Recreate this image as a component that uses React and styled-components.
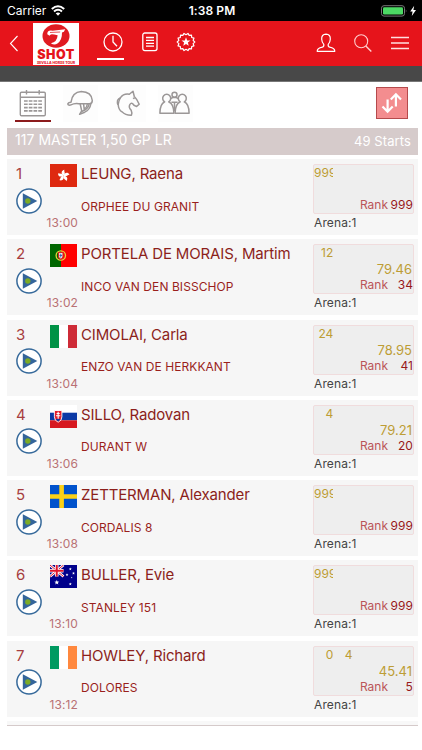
import React from 'react';
import styled, { createGlobalStyle } from 'styled-components';

const GlobalStyle = createGlobalStyle`
  * {
    box-sizing: border-box;
  }

  body {
    margin: 0;
    background: #fff;
    font-family: Inter, 'Liberation Sans', sans-serif;
  }

  svg {
    display: block;
    flex: none;
  }
`;

const Screen = styled.div`
  width: 422px;
  height: 750px;
  overflow: hidden;
  background: #fff;
`;

const StatusBar = styled.div`
  display: grid;
  grid-template-columns: 1fr auto 1fr;
  align-items: center;
  height: 21px;
  padding: 0 5px 0 7px;
  background: #000;
  color: #fff;
  font-size: 12px;
`;

const Carrier = styled.div`
  display: flex;
  align-items: center;
  gap: 5px;
`;

const Clock = styled.div`
  font-weight: 600;
  letter-spacing: 0.1px;
`;

const Battery = styled.div`
  display: flex;
  justify-content: flex-end;
`;

const NavBar = styled.header`
  display: flex;
  align-items: center;
  height: 45px;
  background: #e6141b;
`;

const BackButton = styled.button`
  width: 33px;
  height: 45px;
  padding: 0 0 0 9px;
  border: 0;
  background: none;
`;

const Logo = styled.div`
  display: flex;
  flex-direction: column;
  align-items: center;
  width: 46px;
  height: 42px;
  margin: 0 18px 0 0;
  padding-top: 1px;
  background: #fff;
  color: #e6141b;
`;

const LogoName = styled.span`
  height: 13px;
  font-size: 12.5px;
  line-height: 13px;
  font-weight: 900;
  letter-spacing: 0.5px;
`;

const LogoTagline = styled.span`
  height: 4px;
  font-size: 3.5px;
  line-height: 4px;
  font-weight: 800;
  white-space: nowrap;
`;

const NavItem = styled.button`
  display: flex;
  align-items: center;
  justify-content: center;
  width: ${(p) => p.$width || 37}px;
  height: 34px;
  padding: 0;
  border: 0;
  border-bottom: 2px solid ${(p) => (p.$active ? '#fff' : 'transparent')};
  background: none;
`;

const NavPrimary = styled.div`
  display: flex;
  gap: 5px;
  padding-bottom: 1px;

  ${NavItem}:first-child {
    padding-left: 4px;
  }
`;

const NavActions = styled.div`
  display: flex;
  margin-left: auto;
  padding: 1px 4px 0 0;
`;

const Divider = styled.div`
  height: 16px;
  background: #484848;
  border-bottom: 1px solid #777;
`;

const Tabs = styled.nav`
  display: flex;
  height: 46px;
  padding: 3px 14px 0 15px;
  gap: 12px;
`;

const Tab = styled.button`
  display: flex;
  align-items: center;
  justify-content: center;
  width: 35.5px;
  height: 37px;
  padding: 0;
  border: 0;
  border-bottom: 2px solid ${(p) => (p.$active ? '#8c1a1c' : 'transparent')};
  background: ${(p) => (p.$active ? '#fff' : '#fdfdfd')};
`;

const SortButton = styled.button`
  display: flex;
  align-items: center;
  justify-content: center;
  width: 32px;
  height: 32px;
  margin: 2px 0 0 auto;
  padding: 0;
  border: 1px solid #b54a4c;
  background: #f38d8f;
`;

const SectionHeader = styled.div`
  display: flex;
  justify-content: space-between;
  align-items: center;
  height: 27px;
  margin: 0 4px 0 7px;
  padding: 0 7px 3px 8px;
  background: #d6cbcb;
  color: #fff;
`;

const ClassTitle = styled.span`
  font-size: 14px;
  letter-spacing: 0.04px;
  padding-bottom: 1px;
`;

const StartCount = styled.span`
  font-size: 13px;
  padding-top: 2px;
  letter-spacing: 0.1px;
`;

const StartList = styled.div`
  display: flex;
  flex-direction: column;
  gap: 4.3px;
  margin: 0 4px 0 7px;
  padding-top: 4px;
`;

const Row = styled.div`
  display: grid;
  grid-template-columns: 43px 31px 1fr 105px;
  grid-template-rows: 28.6px 26.4px 21px;
  height: 76px;
  background: #f6f6f6;
  white-space: nowrap;
`;

const StartNumber = styled.div`
  padding: 1px 0 0 9px;
  font-size: 15px;
  line-height: 28px;
  color: #a73e40;
`;

const FlagBox = styled.div`
  padding-top: 5px;
`;

const Rider = styled.div`
  padding-top: 1px;
  font-size: 15px;
  line-height: 27px;
  letter-spacing: -0.15px;
  color: #8c1f1b;
`;

const PlayButton = styled.button`
  grid-column: 1 / 3;
  width: 26px;
  height: 26px;
  margin-left: 9px;
  padding: 0;
  border: 0;
  background: none;
`;

const Horse = styled.div`
  padding-top: 6px;
  font-size: 12px;
  line-height: 26px;
  letter-spacing: 0.07px;
  color: #9a1f1c;
`;

const StartTime = styled.div`
  grid-column: 1 / 3;
  grid-row: 3;
  padding-right: 3px;
  font-size: 12px;
  line-height: 18px;
  letter-spacing: 0.1px;
  text-align: right;
  color: #b97174;
`;

const Result = styled.div`
  grid-column: 4;
  grid-row: 1 / 4;
  padding-top: 5px;
`;

const ScoreBox = styled.div`
  width: 101px;
  height: 50px;
  border: 1px solid #f0dcdd;
  border-radius: 2px;
  background: #eee;
`;

const Faults = styled.div`
  display: flex;
  height: 16px;
  font-size: 12px;
  line-height: 16px;
  color: #bd9d35;
`;

const Fault = styled.span`
  width: 19.3px;
  overflow: hidden;
  text-align: right;
`;

const RideTime = styled.div`
  height: 16px;
  padding-right: 1px;
  font-size: 13px;
  line-height: 17px;
  text-align: right;
  color: #bd9d35;
`;

const Rank = styled.div`
  display: grid;
  grid-template-columns: 1fr 25px;
  font-size: 12px;
  line-height: 16px;
  text-align: right;
  color: #bb5558;
`;

const RankValue = styled.span`
  letter-spacing: 0.1px;
  color: #98191b;
`;

const Arena = styled.div`
  padding-left: 1px;
  font-size: 12px;
  line-height: 18px;
  letter-spacing: 0.12px;
  color: #444;
`;

const NextRow = styled.div`
  height: 5px;
  margin: 4px 4px 0 7px;
  background: #f8f8f8;
  border-bottom: 1px solid #d5caca;
`;

const Star = ({ x, y, r, fill = '#fff' }) => {
  const points = Array.from({ length: 10 }, (_, i) => {
    const radius = i % 2 ? r * 0.42 : r;
    const angle = (Math.PI / 5) * i - Math.PI / 2;
    return `${x + radius * Math.cos(angle)},${y + radius * Math.sin(angle)}`;
  });
  return <polygon points={points.join(' ')} fill={fill} />;
};

const flags = {
  hk: (
    <>
      <path d="M0 0h27v23H0z" fill="#de2910" />
      {[0, 72, 144, 216, 288].map((angle) => (
        <path key={angle} transform={`rotate(${angle} 13.5 11.7)`} d="M13.5 11.7C10.7 9.5 11.2 6.3 14.5 5.7C13.5 7.3 16.3 9.1 13.5 11.7Z" fill="#fff" />
      ))}
    </>
  ),
  pt: (
    <>
      <path d="M0 0h27v23H0z" fill="#f00" />
      <path d="M0 0h11v23H0z" fill="#060" />
      <circle cx="10.8" cy="11.5" r="4.7" fill="none" stroke="#e8d43a" strokeWidth="1.3" />
      <path d="M8.6 8.5h4.4v4q0 2-2.2 2.7Q8.6 14.5 8.6 12.5Z" fill="#fff" stroke="#d22" strokeWidth="1.2" />
      <path d="M10.8 9.6v4M9.5 11.4h2.6" stroke="#345fa5" />
    </>
  ),
  it: (
    <>
      <path d="M0 0h27v23H0z" fill="#fff" />
      <path d="M0 0h9v23H0z" fill="#009246" />
      <path d="M18 0h9v23h-9z" fill="#ce2b37" />
    </>
  ),
  sk: (
    <>
      <path d="M0 0h27v8H0z" fill="#fff" />
      <path d="M0 7.7h27v7.6H0z" fill="#0b39a5" />
      <path d="M0 15.3h27V23H0z" fill="#d71820" />
      <path d="M4.4 5.5h7.5v6.3q0 4-3.75 5.4Q4.4 15.8 4.4 11.8Z" fill="#e31c2a" stroke="#fff" strokeWidth="0.9" />
      <path d="M8.15 6.8v7M6.6 8.5h3.1M6 10.8h4.3" stroke="#fff" strokeWidth="1.1" />
      <path d="M5.8 14.6q1.3-1.5 2.35-.4q1.1-1.1 2.3.4l-2.3 1.8Z" fill="#0b39a5" />
    </>
  ),
  se: (
    <>
      <path d="M0 0h27v23H0z" fill="#0052cc" />
      <path d="M9.3 0h4.6v23H9.3zM0 9.2h27v4.6H0z" fill="#fbd116" />
    </>
  ),
  au: (
    <>
      <path d="M0 0h27v23H0z" fill="#00008b" />
      <path d="M0 0l13.5 11.5M13.5 0L0 11.5" stroke="#fff" strokeWidth="2.6" />
      <path d="M0 0l13.5 11.5M13.5 0L0 11.5" stroke="#e0142d" strokeWidth="1" />
      <path d="M6.75 0v11.5M0 5.75h13.5" stroke="#fff" strokeWidth="3.6" />
      <path d="M6.75 0v11.5M0 5.75h13.5" stroke="#e0142d" strokeWidth="2" />
      <Star x={6.8} y={17.5} r={2.6} />
      <Star x={20.3} y={4} r={1.5} />
      <Star x={17} y={9.8} r={1.5} />
      <Star x={23.5} y={8.3} r={1.5} />
      <Star x={20.3} y={19} r={1.6} />
      <Star x={21.7} y={12.6} r={0.8} />
    </>
  ),
  ie: (
    <>
      <path d="M0 0h27v23H0z" fill="#fff" />
      <path d="M0 0h9v23H0z" fill="#009a61" />
      <path d="M18 0h9v23h-9z" fill="#ff883e" />
    </>
  ),
};

const Flag = ({ code }) => (
  <svg width="27" height="23" viewBox="0 0 27 23">{flags[code]}</svg>
);

const PlayIcon = () => (
  <svg width="26" height="26" viewBox="0 0 26 26">
    <circle cx="13" cy="13" r="12.1" fill="#fff" stroke="#376a9b" strokeWidth="1.5" />
    <path d="M6.8 5.2L21.3 13L6.8 20.8Z" fill="#34659a" />
    <circle cx="11.8" cy="13" r="2.7" fill="#7cab26" />
  </svg>
);

const LogoMark = () => (
  <svg width="28" height="24" viewBox="0 0 29 26" preserveAspectRatio="none">
    <ellipse cx="14.5" cy="13" rx="14" ry="12.7" fill="#e01b22" />
    <path d="M5.5 11.2Q5 6.2 11 7.2L24 5.7L22.7 8.5L20.7 9.3Q21 17.5 16 21.2Q12.5 23.2 9.2 20.8Q15.7 19.6 16.2 12.2L12.5 11.5Q8.7 10 7.8 12.8Z" fill="#fff" />
    <path d="M8.3 9.2l10.5-.5" stroke="#e01b22" strokeWidth="0.8" />
  </svg>
);

const badgePath = () => {
  const points = Array.from({ length: 28 }, (_, i) => {
    const r = i % 2 ? 7.3 : 8.8;
    const a = (Math.PI / 14) * i;
    return `${10 + r * Math.cos(a)},${10 + r * Math.sin(a)}`;
  });
  return `M${points.join('L')}Z`;
};

const CalendarIcon = () => (
  <svg width="28" height="28" viewBox="0 0 28 28" fill="none" stroke="#9b9797" strokeWidth="1.4">
    <rect x="1.3" y="3.2" width="25" height="23.5" rx="1.2" />
    <path d="M7.5 1v4.5M20.2 1v4.5M1.3 8.2h25" />
    <path d="M5 12h18M5 15.3h18M5 18.6h18M5 21.9h18" strokeWidth="1.6" strokeDasharray="3.7 1.05" />
  </svg>
);

const HelmetIcon = () => (
  <svg width="28" height="28" viewBox="0 0 28 28" fill="none" stroke="#9b9797" strokeWidth="1.5" strokeLinejoin="round" strokeLinecap="round">
    <path d="M5 13.2Q6.2 3.3 15.3 2.6Q25.6 3 26.3 11.5Q26.3 14.7 23.5 14.8H12.7Q9 14 4.3 16.1Q1.6 16.4 1.9 14.6Q2.5 13.3 5 13.2Z" />
    <path d="M14.2 15L15.7 21.8L13.6 25.3L18.7 23.2Q24 20.6 24.8 15M17.6 15L18.2 20.2Q21 18.5 21.4 15" />
    <path d="M16.2 22.3Q22 20 23 15.5" />
  </svg>
);

const HorseIcon = () => (
  <svg width="28" height="28" viewBox="0 0 28 28" fill="none" stroke="#9b9797" strokeWidth="1.5" strokeLinejoin="round" strokeLinecap="round">
    <path d="M19 2.2L20.3 7.5Q23.2 10.3 25.2 15.2L22.6 17.4Q19.8 17 18.6 14.6Q16.9 13.6 15.7 15.8Q14.4 18.2 17.2 21.3Q18.4 23.7 17.4 26.2Q11.5 26.4 8 22.8Q4.5 20.9 4.2 15.5Q3 15 3.6 11.3Q4.5 9.3 6.3 8.9Q9.7 4.3 15.3 5.3Z" />
    <path d="M6.3 8.9Q4.9 11 4.2 15.5M19.5 9.2l.6.3" />
  </svg>
);

const PeopleIcon = () => (
  <svg width="32" height="28" viewBox="0 0 32 28" fill="none" stroke="#9b9797" strokeWidth="1.5" strokeLinejoin="round">
    <path d="M5.7 12.8A4 4 0 1 1 9.7 12.8Q14.9 15.1 14.9 24.3H.9Q.9 15.1 5.7 12.8Z" />
    <path d="M21.3 12.8A4 4 0 1 1 25.3 12.8Q30.1 15.1 30.1 24.3H16.1Q16.1 15.1 21.3 12.8Z" />
    <circle cx="15.5" cy="5.8" r="2.5" />
    <path d="M11.7 9.5L14.2 8.4H16.8L19.3 9.5M12.4 13.3h6.2M15.5 13.3V22" />
  </svg>
);

const tabs = [
  { name: 'Schedule', icon: CalendarIcon },
  { name: 'Riders', icon: HelmetIcon },
  { name: 'Horses', icon: HorseIcon },
  { name: 'Teams', icon: PeopleIcon },
];

const starts = [
  { rider: 'LEUNG, Raena', horse: 'ORPHEE DU GRANIT', flag: 'hk', time: '13:00', faults: ['999'], rank: 999 },
  { rider: 'PORTELA DE MORAIS, Martim', horse: 'INCO VAN DEN BISSCHOP', flag: 'pt', time: '13:02', faults: ['12'], rideTime: '79.46', rank: 34 },
  { rider: 'CIMOLAI, Carla', horse: 'ENZO VAN DE HERKKANT', flag: 'it', time: '13:04', faults: ['24'], rideTime: '78.95', rank: 41 },
  { rider: 'SILLO, Radovan', horse: 'DURANT W', flag: 'sk', time: '13:06', faults: ['4'], rideTime: '79.21', rank: 20 },
  { rider: 'ZETTERMAN, Alexander', horse: 'CORDALIS 8', flag: 'se', time: '13:08', faults: ['999'], rank: 999 },
  { rider: 'BULLER, Evie', horse: 'STANLEY 151', flag: 'au', time: '13:10', faults: ['999'], rank: 999 },
  { rider: 'HOWLEY, Richard', horse: 'DOLORES', flag: 'ie', time: '13:12', faults: ['0', '4'], rideTime: '45.41', rank: 5 },
];

function TopBar() {
  return (
    <NavBar>
      <BackButton aria-label="Back">
        <svg width="10" height="17" viewBox="0 0 10 17" fill="none" stroke="#fff" strokeWidth="1.1">
          <path d="M8.5 1L1.5 8.5L8.5 16" />
        </svg>
      </BackButton>
      <Logo>
        <LogoMark />
        <LogoName>SHOT</LogoName>
        <LogoTagline>SEVILLA HORSE TOUR</LogoTagline>
      </Logo>
      <NavPrimary>
        <NavItem $active $width={27} aria-label="Start lists">
          <svg width="20" height="20" viewBox="0 0 20 20" fill="none" stroke="#fff" strokeWidth="1.3">
            <circle cx="10" cy="10" r="9" />
            <path d="M10 3.7V10l4 4.3" />
          </svg>
        </NavItem>
        <NavItem $width={41} aria-label="Results">
          <svg width="16" height="20" viewBox="0 0 16 20" fill="none" stroke="#fff" strokeWidth="1.3">
            <rect x="0.8" y="1" width="14.2" height="17.6" rx="2" />
            <path d="M4 5.5h8M4 8.4h8M4 11.3h8M4 14.2h8" />
          </svg>
        </NavItem>
        <NavItem $width={22} aria-label="Rankings">
          <svg width="20" height="20" viewBox="0 0 20 20">
            <path d={badgePath()} fill="none" stroke="#fff" strokeWidth="1.2" strokeLinejoin="round" />
            <Star x={10} y={10} r={4.7} />
          </svg>
        </NavItem>
      </NavPrimary>
      <NavActions>
        <NavItem aria-label="Profile">
          <svg width="20" height="20" viewBox="0 0 20 20" fill="none" stroke="#fff" strokeWidth="1.2" strokeLinejoin="round">
            <path d="M10 1.2Q5.4 1.3 5.7 6.2Q5.9 9.5 7.8 11.4Q8.2 13.6 6.4 14.1Q1.2 15 1.2 18.3H18.8Q18.8 15 13.6 14.1Q11.8 13.6 12.2 11.4Q14.1 9.5 14.3 6.2Q14.6 1.3 10 1.2Z" />
          </svg>
        </NavItem>
        <NavItem aria-label="Search">
          <svg width="19" height="20" viewBox="0 0 19 20" fill="none" stroke="#ffd0d0" strokeWidth="1.1">
            <circle cx="8.2" cy="8.2" r="6.5" />
            <path d="M12.8 12.9L18.3 18.5" strokeWidth="1.4" />
          </svg>
        </NavItem>
        <NavItem aria-label="Menu">
          <svg width="18" height="14" viewBox="0 0 18 14" stroke="#ffe0e0" strokeWidth="1.4">
            <path d="M0 1.5h18M0 7h18M0 12.5h18" />
          </svg>
        </NavItem>
      </NavActions>
    </NavBar>
  );
}

function StartRow({ number, start }) {
  return (
    <Row>
      <StartNumber>{number}</StartNumber>
      <FlagBox><Flag code={start.flag} /></FlagBox>
      <Rider>{start.rider}</Rider>
      <Result>
        <ScoreBox>
          <Faults>
            {start.faults.map((fault, i) => <Fault key={i}>{fault}</Fault>)}
          </Faults>
          <RideTime>{start.rideTime}</RideTime>
          <Rank>
            Rank <RankValue>{start.rank}</RankValue>
          </Rank>
        </ScoreBox>
        <Arena>Arena:1</Arena>
      </Result>
      <PlayButton aria-label="Play"><PlayIcon /></PlayButton>
      <Horse>{start.horse}</Horse>
      <StartTime>{start.time}</StartTime>
    </Row>
  );
}

function App() {
  return (
    <Screen>
      <GlobalStyle />
      <StatusBar>
        <Carrier>
          Carrier
          <svg width="14" height="11" viewBox="0 0 14 11" fill="none" stroke="#fff" strokeWidth="2">
            <path d="M.8 4Q7-1.6 13.2 4M3 6.5Q7 3 11 6.5" />
            <path d="M4.7 8.3Q7 6.6 9.3 8.3L7 10.7Z" fill="#fff" stroke="none" />
          </svg>
        </Carrier>
        <Clock>1:38 PM</Clock>
        <Battery>
          <svg width="36" height="12" viewBox="0 0 36 12">
            <rect x="0.5" y="0.7" width="23" height="10.4" rx="2.5" fill="none" stroke="#777" />
            <rect x="2" y="2.2" width="20" height="7.4" rx="1.3" fill="#4cd964" />
            <path d="M24.8 4.2q1.4 1.7 0 3.4Z" fill="#777" />
            <path d="M33.2.8L29.2 6.6h2.4L30.8 11L35 5.1h-2.6Z" fill="#fff" />
          </svg>
        </Battery>
      </StatusBar>
      <TopBar />
      <Divider />
      <Tabs>
        {tabs.map((tab, i) => (
          <Tab key={tab.name} $active={i === 0} aria-label={tab.name}>
            <tab.icon />
          </Tab>
        ))}
        <SortButton aria-label="Sort">
          <svg width="22" height="22" viewBox="0 0 22 22" fill="none" stroke="#fff" strokeWidth="2.2">
            <path d="M6.6 7.5v12M1.5 14.5l5.1 5.2l5.1-5.2M14.9 14.5V2.3M9.8 7.5l5.1-5.2L20 7.5" />
          </svg>
        </SortButton>
      </Tabs>
      <SectionHeader>
        <ClassTitle>117 MASTER 1,50 GP LR</ClassTitle>
        <StartCount>49 Starts</StartCount>
      </SectionHeader>
      <StartList>
        {starts.map((start, i) => (
          <StartRow key={start.rider} number={i + 1} start={start} />
        ))}
      </StartList>
      <NextRow />
    </Screen>
  );
}

export default App;
